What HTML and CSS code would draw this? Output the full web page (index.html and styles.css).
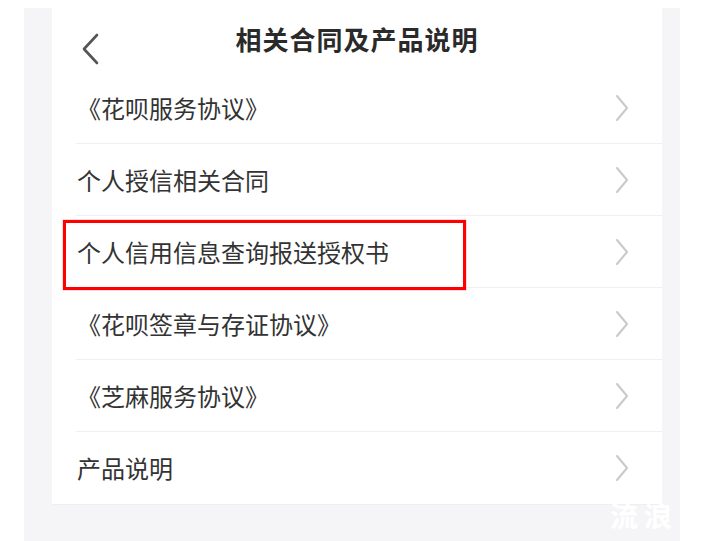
FILE: index.html
```html
<!DOCTYPE html>
<html lang="zh-CN">
<head>
<meta charset="utf-8">
<title>相关合同及产品说明</title>
<link rel="stylesheet" href="styles.css">
</head>
<body>
<div class="panel">
  <div class="card">
    <div class="header">
      <svg class="back" width="18" height="32" viewBox="0 0 18 32"><polyline points="16,2 3,16 16,30" fill="none" stroke="#555" stroke-width="2.6" stroke-linecap="round" stroke-linejoin="round"/></svg>
      <div class="title">相关合同及产品说明</div>
    </div>
    <div class="row"><span class="label">《花呗服务协议》</span><svg class="chev" width="14" height="28" viewBox="0 0 14 28"><polyline points="2,2 12,14 2,26" fill="none" stroke="#c9c9c9" stroke-width="2" stroke-linecap="round" stroke-linejoin="round"/></svg></div>
    <div class="row"><span class="label">个人授信相关合同</span><svg class="chev" width="14" height="28" viewBox="0 0 14 28"><polyline points="2,2 12,14 2,26" fill="none" stroke="#c9c9c9" stroke-width="2" stroke-linecap="round" stroke-linejoin="round"/></svg></div>
    <div class="row marked"><span class="label">个人信用信息查询报送授权书</span><svg class="chev" width="14" height="28" viewBox="0 0 14 28"><polyline points="2,2 12,14 2,26" fill="none" stroke="#c9c9c9" stroke-width="2" stroke-linecap="round" stroke-linejoin="round"/></svg><div class="highlight"></div></div>
    <div class="row"><span class="label">《花呗签章与存证协议》</span><svg class="chev" width="14" height="28" viewBox="0 0 14 28"><polyline points="2,2 12,14 2,26" fill="none" stroke="#c9c9c9" stroke-width="2" stroke-linecap="round" stroke-linejoin="round"/></svg></div>
    <div class="row"><span class="label">《芝麻服务协议》</span><svg class="chev" width="14" height="28" viewBox="0 0 14 28"><polyline points="2,2 12,14 2,26" fill="none" stroke="#c9c9c9" stroke-width="2" stroke-linecap="round" stroke-linejoin="round"/></svg></div>
    <div class="row last"><span class="label">产品说明</span><svg class="chev" width="14" height="28" viewBox="0 0 14 28"><polyline points="2,2 12,14 2,26" fill="none" stroke="#c9c9c9" stroke-width="2" stroke-linecap="round" stroke-linejoin="round"/></svg></div>
  </div>
  <div class="watermark">流浪</div>
</div>
</body>
</html>
```

FILE: styles.css
```css
html, body {
  margin: 0;
  padding: 0;
  background: #ffffff;
  font-family: "Noto Sans CJK SC", "Noto Sans", sans-serif;
}

.panel {
  position: relative;
  box-sizing: border-box;
  margin: 8px 40px 0 24px;
  height: 533px;
  padding: 0 18px 0 28px;
  background: #f5f5f7;
  overflow: hidden;
}

.card {
  background: #ffffff;
  border-bottom: 1px solid #efeff1;
}

.header {
  position: relative;
  height: 64px;
  display: flex;
  align-items: center;
  justify-content: center;
}

.back {
  position: absolute;
  left: 29px;
  top: 25px;
}

.title {
  font-size: 26px;
  font-weight: 700;
  color: #2a2a2a;
  line-height: 1;
  letter-spacing: 1px;
  margin-top: -2px;
}

.row {
  position: relative;
  box-sizing: border-box;
  height: 72px;
  margin-left: 24px;
  padding-right: 33px;
  display: flex;
  align-items: center;
  justify-content: space-between;
  border-bottom: 1px solid #f0f0f2;
}

.row.last {
  border-bottom: none;
}

.label {
  font-size: 24px;
  color: #333333;
  line-height: 1;
  margin-left: 1px;
}

.chev {
  flex: none;
}

.highlight {
  position: absolute;
  left: -13px;
  top: 4px;
  width: 403px;
  height: 70px;
  box-sizing: border-box;
  border: 3px solid #ff0000;
  box-shadow: 0 0 1px #ff3030;
  pointer-events: none;
}

.watermark {
  position: absolute;
  right: 2px;
  bottom: 8px;
  font-size: 28px;
  font-weight: 700;
  line-height: 1.2;
  color: #ffffff;
  letter-spacing: 6px;
}
```
